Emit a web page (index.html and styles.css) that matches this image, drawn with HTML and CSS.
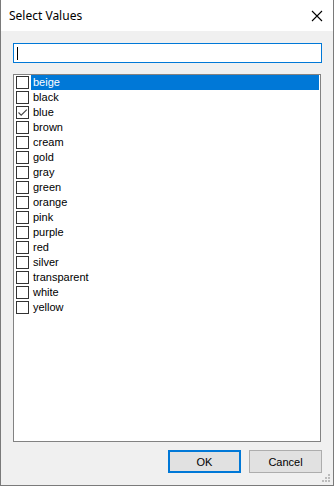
FILE: index.html
```html
<!DOCTYPE html>
<html>
<head>
<meta charset="utf-8">
<link rel="stylesheet" href="styles.css">
</head>
<body>
<div class="window">
  <div class="titlebar">
    <span class="title">Select Values</span>
    <svg class="close" width="12" height="12" viewBox="0 0 12 12"><path d="M1 1 L11 11 M11 1 L1 11" stroke="#000" stroke-width="1.1" fill="none"/></svg>
  </div>
  <div class="content">
    <div class="search"><span class="caret"></span></div>
    <div class="list">
      <div class="item selected"><span class="box"></span><span class="label">beige</span></div>
      <div class="item"><span class="box"></span><span class="label">black</span></div>
      <div class="item"><span class="box"><svg width="11" height="11" viewBox="0 0 11 11"><path d="M1.5 5.5 L4.2 8.2 L9.8 2.6" stroke="#444" stroke-width="1.1" fill="none"/></svg></span><span class="label">blue</span></div>
      <div class="item"><span class="box"></span><span class="label">brown</span></div>
      <div class="item"><span class="box"></span><span class="label">cream</span></div>
      <div class="item"><span class="box"></span><span class="label">gold</span></div>
      <div class="item"><span class="box"></span><span class="label">gray</span></div>
      <div class="item"><span class="box"></span><span class="label">green</span></div>
      <div class="item"><span class="box"></span><span class="label">orange</span></div>
      <div class="item"><span class="box"></span><span class="label">pink</span></div>
      <div class="item"><span class="box"></span><span class="label">purple</span></div>
      <div class="item"><span class="box"></span><span class="label">red</span></div>
      <div class="item"><span class="box"></span><span class="label">silver</span></div>
      <div class="item"><span class="box"></span><span class="label">transparent</span></div>
      <div class="item"><span class="box"></span><span class="label">white</span></div>
      <div class="item"><span class="box"></span><span class="label">yellow</span></div>
    </div>
    <div class="buttons">
      <button class="btn default">OK</button>
      <button class="btn">Cancel</button>
    </div>
  </div>
  <svg class="grip" width="9" height="9" viewBox="0 0 9 9">
    <rect x="6" y="0" width="2" height="2" fill="#bcbcbc"/>
    <rect x="3" y="3" width="2" height="2" fill="#bcbcbc"/>
    <rect x="6" y="3" width="2" height="2" fill="#bcbcbc"/>
    <rect x="0" y="6" width="2" height="2" fill="#bcbcbc"/>
    <rect x="3" y="6" width="2" height="2" fill="#bcbcbc"/>
    <rect x="6" y="6" width="2" height="2" fill="#bcbcbc"/>
  </svg>
</div>
</body>
</html>
```
FILE: styles.css
```css
html, body {
  margin: 0;
  padding: 0;
}
body {
  width: 334px;
  height: 486px;
  overflow: hidden;
  font-family: "Liberation Sans", Arial, sans-serif;
  font-size: 11px;
  color: #000;
}
.window {
  position: relative;
  width: 334px;
  height: 486px;
  box-sizing: border-box;
  border: 1px solid #7a7a7a;
  border-top: none;
  background: #f0f0f0;
  display: flex;
  flex-direction: column;
}
.titlebar {
  height: 31px;
  background: #fff;
  display: flex;
  align-items: center;
  justify-content: space-between;
  padding: 0 10px 0 8px;
  flex: none;
}
.title {
  font-family: "Noto Sans", "Open Sans", sans-serif;
  font-size: 12px;
  position: relative;
  top: 0px;
}
.close {
  display: block;
}
.content {
  flex: 1;
  display: flex;
  flex-direction: column;
  padding: 12px 11px 0 12px;
}
.search {
  height: 20px;
  box-sizing: border-box;
  border: 1px solid #0078d7;
  background: #fff;
  display: flex;
  align-items: center;
  padding-left: 3px;
}
.caret {
  width: 1px;
  height: 13px;
  background: #000;
}
.list {
  margin-top: 11px;
  margin-right: 1px;
  height: 368px;
  box-sizing: border-box;
  border: 1px solid #828282;
  background: #fff;
  padding: 0 1px 0 0;
}
.item {
  height: 15px;
  display: flex;
  align-items: center;
}
.box {
  width: 13px;
  height: 13px;
  box-sizing: border-box;
  border: 1px solid #333;
  background: #fff;
  margin-left: 2px;
  margin-right: 2px;
  flex: none;
  display: flex;
  align-items: center;
  justify-content: center;
}
.box svg {
  display: block;
}
.label {
  flex: 1;
  height: 15px;
  line-height: 15px;
  padding-left: 2px;
}
.item.selected .label {
  background: #0078d7;
  color: #fff;
}
.buttons {
  margin-top: 8px;
  display: flex;
  justify-content: flex-end;
  gap: 8px;
}
.btn {
  width: 73px;
  height: 23px;
  box-sizing: border-box;
  border: 1px solid #adadad;
  background: #e1e1e1;
  font-family: "Liberation Sans", Arial, sans-serif;
  font-size: 11px;
  color: #000;
  padding: 0;
  margin: 0;
}
.btn.default {
  border-color: #0078d7;
  box-shadow: inset 0 0 0 1px #0078d7;
}
.grip {
  position: absolute;
  right: 2px;
  bottom: 2px;
}
```
